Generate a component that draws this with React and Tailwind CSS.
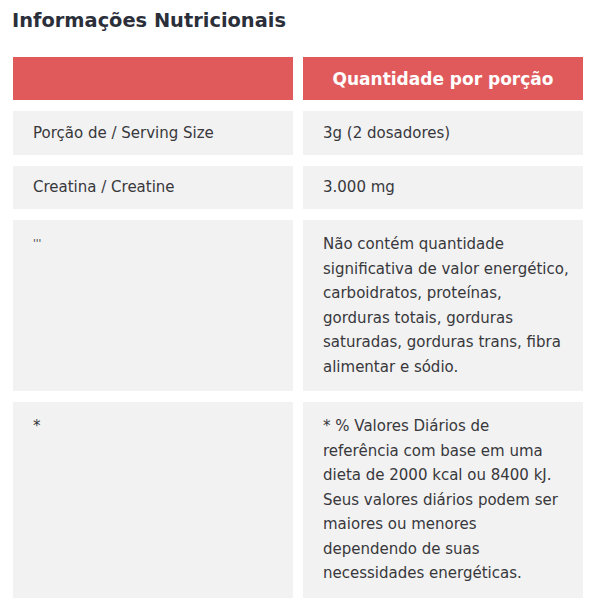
export default function App() {
  const font = { fontFamily: '"DejaVu Sans", "Noto Sans", sans-serif' };
  const cell = "bg-[#f2f2f2] px-5 text-[15px] leading-[24.5px] text-[#38383c]";
  return (
    <div className="w-[600px] h-[600px] bg-white pl-[13px] pt-[7px]" style={font}>
      <h1 className="text-[19.4px] leading-[28px] font-bold text-[#2b2f3a] -ml-[1px] mb-[22px]">
        Informações Nutricionais
      </h1>
      <div className="w-[570px] grid grid-cols-2 gap-x-[10px] gap-y-[11px]">
        <div className="h-[43px] bg-[#e05a5c]"></div>
        <div className="h-[43px] bg-[#e05a5c] flex items-center justify-center pt-[3px]">
          <span className="text-white font-bold text-[17px]">Quantidade por porção</span>
        </div>

        <div className={`${cell} h-[44px] flex items-center`}>Porção de / Serving Size</div>
        <div className={`${cell} h-[44px] flex items-center`}>3g (2 dosadores)</div>

        <div className={`${cell} h-[43px] flex items-center`}>Creatina / Creatine</div>
        <div className={`${cell} h-[43px] flex items-center`}>3.000 mg</div>

        <div className={`${cell} py-3`}>
          <span className="text-[10px] align-top">'''</span>
        </div>
        <div className={`${cell} py-3 whitespace-nowrap`}>
          Não contém quantidade<br />
          significativa de valor energético,<br />
          carboidratos, proteínas,<br />
          gorduras totais, gorduras<br />
          saturadas, gorduras trans, fibra<br />
          alimentar e sódio.
        </div>

        <div className={`${cell} py-3`}>*</div>
        <div className={`${cell} py-3 whitespace-nowrap`}>
          * % Valores Diários de<br />
          referência com base em uma<br />
          dieta de 2000 kcal ou 8400 kJ.<br />
          Seus valores diários podem ser<br />
          maiores ou menores<br />
          dependendo de suas<br />
          necessidades energéticas.
        </div>
      </div>
    </div>
  );
}
